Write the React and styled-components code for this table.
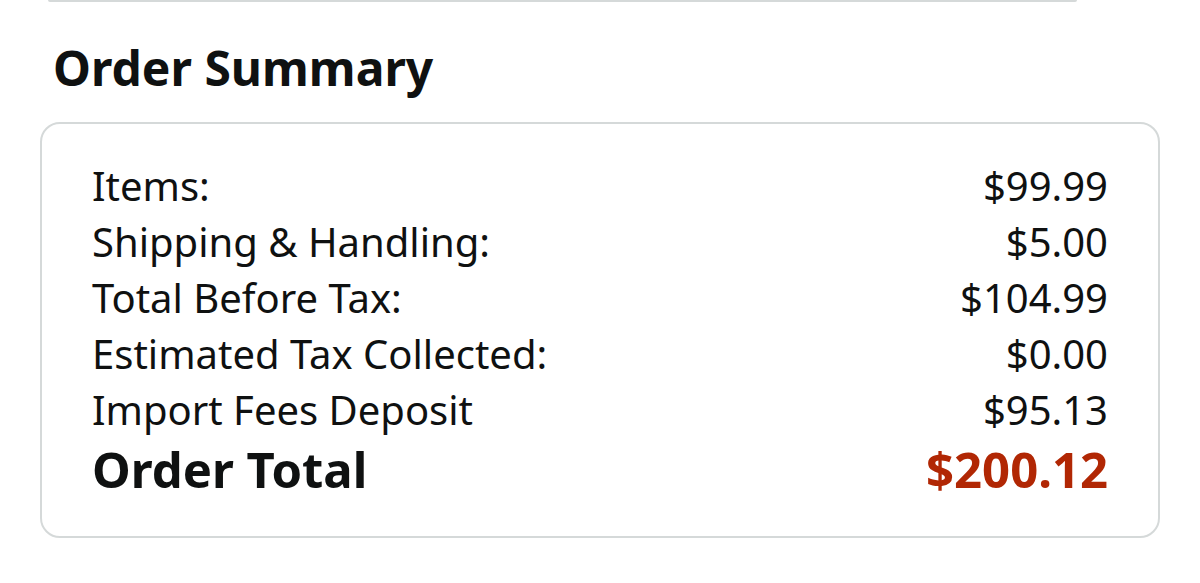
import { styled, createGlobalStyle } from "styled-components";

const GlobalStyle = createGlobalStyle`
  body {
    margin: 0;
    background: #fff;
    font-family: "Noto Sans", "Open Sans", sans-serif;
    color: #0f1111;
  }
`;

const Page = styled.div`
  width: 1200px;
  height: 583px;
  overflow: hidden;
  padding: 0 40px 0 40px;
  box-sizing: border-box;
`;

const PrevCard = styled.div`
  height: 2px;
  margin: 0 83px 0 8px;
  background: #d5d9d9;
  border-radius: 0 0 6px 6px;
`;

const Heading = styled.h2`
  margin: 36px 0 0 13px;
  font-size: 48px;
  line-height: 60px;
  font-weight: 700;
`;

const Card = styled.div`
  margin-top: 24px;
  border: 2px solid #d5d9d9;
  border-radius: 20px;
  padding: 34px 50px 36px 50px;
  width: 1120px;
  box-sizing: border-box;
`;

const Row = styled.div`
  display: flex;
  justify-content: space-between;
  font-size: ${(p) => (p.$total ? "49px" : "40px")};
  font-weight: ${(p) => (p.$total ? 700 : 400)};
  line-height: ${(p) => (p.$total ? "62px" : "56px")};
`;

const Amount = styled.span`
  color: ${(p) => (p.$red ? "#b12704" : "#0f1111")};
`;

const rows = [
  ["Items:", "$99.99"],
  ["Shipping & Handling:", "$5.00"],
  ["Total Before Tax:", "$104.99"],
  ["Estimated Tax Collected:", "$0.00"],
  ["Import Fees Deposit", "$95.13"],
];

const App = () => {
  return (
    <Page>
      <GlobalStyle />
      <PrevCard />
      <Heading>Order Summary</Heading>
      <Card>
        {rows.map(([label, value]) => (
          <Row key={label}>
            <span>{label}</span>
            <Amount>{value}</Amount>
          </Row>
        ))}
        <Row $total>
          <span>Order Total</span>
          <Amount $red>$200.12</Amount>
        </Row>
      </Card>
    </Page>
  );
};

export default App;
